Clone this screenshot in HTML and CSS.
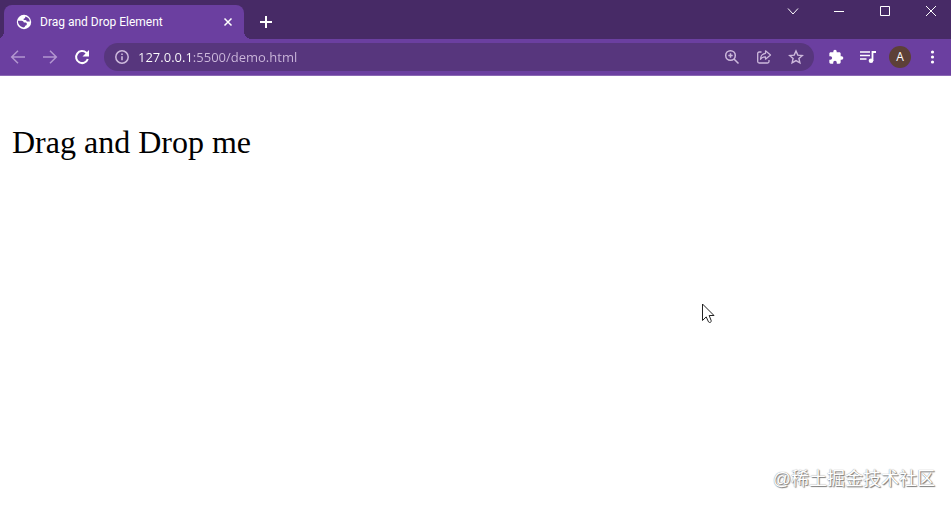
FILE: index.html
```html
<!DOCTYPE html>
<html lang="en">
<head>
    <meta charset="UTF-8">
    <meta name="viewport" content="width=device-width, initial-scale=1.0">
    <title>Drag and Drop Element</title>
    <link rel="stylesheet" href="styles.css">
</head>
<body>
    <header class="title-bar">
        <div class="tab">
            <svg class="favicon" width="16" height="16" viewBox="0 0 16 16">
                <circle cx="8" cy="8" r="7.2" fill="#fff"/>
                <path d="M2 6.800h3.600q1.900 0 2.300 1.800h1.700q1.300.1 1.300 1.500-.1 1.500-1.700 1.600-.2 1.500-1.600 1.700l-1-.2C3.800 12.300 1.700 9.800 2 6.800z" fill="#6b3fa0"/>
                <path d="M9.300 2.500v.8q-.1 1.300-1.600 1.400-.5.900.3 1.400h1.500q1.200.2 1.300 1.500h3.100C13.700 5 11.900 3 9.300 2.500z" fill="#6b3fa0"/>
            </svg>
            <span class="tab-title">Drag and Drop Element</span>
            <button class="tab-close" aria-label="Close tab">
                <svg width="10" height="10" viewBox="0 0 10 10"><path d="M1.500 1.500l7 7M8.500 1.500l-7 7"/></svg>
            </button>
        </div>
        <button class="new-tab" aria-label="New tab">
            <svg width="14" height="14" viewBox="0 0 14 14"><path d="M7 1v12M1 7h12"/></svg>
        </button>
        <div class="window-controls">
            <button aria-label="Search tabs">
                <svg width="12" height="12" viewBox="0 0 12 12"><path d="M1 3.500l5 5.500 5-5.500"/></svg>
            </button>
            <button aria-label="Minimize">
                <svg width="12" height="12" viewBox="0 0 12 12"><path d="M1 6.500h10"/></svg>
            </button>
            <button aria-label="Maximize">
                <svg width="12" height="12" viewBox="0 0 12 12"><path d="M1.500 1.500h9v9h-9z"/></svg>
            </button>
            <button aria-label="Close">
                <svg width="12" height="12" viewBox="0 0 12 12"><path d="M1 1l10 10M11 1L1 11"/></svg>
            </button>
        </div>
    </header>

    <nav class="toolbar">
        <button class="tool dim" aria-label="Back">
            <svg width="16" height="16" viewBox="0 0 16 16"><path d="M15 8H2M8 1.700L1.700 8 8 14.300"/></svg>
        </button>
        <button class="tool dim" aria-label="Forward">
            <svg width="16" height="16" viewBox="0 0 16 16"><path d="M1 8h13M8 1.700L14.300 8 8 14.300"/></svg>
        </button>
        <button class="tool" aria-label="Reload">
            <svg width="16" height="16" viewBox="0 0 16 16">
                <path d="M13.800 10A6 6 0 1 1 12.300 3.800L14 5.500" stroke-width="2"/>
                <path d="M15 1v6.500H8.500z" fill="currentColor" stroke="none"/>
            </svg>
        </button>

        <div class="address-bar">
            <button class="tool" aria-label="Site information">
                <svg width="16" height="16" viewBox="0 0 16 16">
                    <circle cx="8" cy="8" r="6.200" stroke-width="1.500"/>
                    <path d="M8 7.200v4M8 4.400v1.600" stroke-width="1.600"/>
                </svg>
            </button>
            <input class="url" type="text" value="127.0.0.1:5500/demo.html" aria-label="Address">
            <button class="tool" aria-label="Zoom">
                <svg width="16" height="16" viewBox="0 0 16 16">
                    <circle cx="6.500" cy="6.500" r="4.800"/>
                    <path d="M10 10l4.500 4.500M6.500 4.300v4.400M4.300 6.500h4.400"/>
                </svg>
            </button>
            <button class="tool" aria-label="Share">
                <svg width="16" height="16" viewBox="0 0 16 16">
                    <path d="M5.500 3H3.200Q1.700 3 1.700 4.500v8Q1.700 14 3.200 14h8.300q1.500 0 1.500-1.500V11" stroke-width="1.300"/>
                    <path d="M9.500 1.800L14.500 6l-5 4.200V7.800C7 7.700 5.700 8.600 4.500 10.300c.2-3.200 1.900-5.500 5-6z" stroke-width="1.200" stroke-linejoin="round"/>
                </svg>
            </button>
            <button class="tool" aria-label="Bookmark">
                <svg width="16" height="16" viewBox="0 0 16 16"><path d="M8 2l1.800 4.100 4.500.4-3.400 3 1 4.400L8 11.600l-3.900 2.300 1-4.400-3.400-3 4.500-.4z" stroke-width="1.400"/></svg>
            </button>
        </div>

        <button class="tool" aria-label="Extensions">
            <svg width="16" height="16" viewBox="0 0 24 24"><path fill="currentColor" stroke="none" d="M20.500 11H19V7c0-1.100-.9-2-2-2h-4V3.500a2.500 2.500 0 0 0-5 0V5H4c-1.100 0-2 .9-2 2v3.800h1.500a2.700 2.700 0 0 1 0 5.400H2V20c0 1.100.9 2 2 2h3.800v-1.500a2.700 2.700 0 0 1 5.400 0V22H17c1.100 0 2-.9 2-2v-4h1.500a2.500 2.500 0 0 0 0-5z"/></svg>
        </button>
        <button class="tool" aria-label="Media controls">
            <svg width="16" height="16" viewBox="0 0 16 16">
                <path d="M0 3h10M0 6.500h10M0 10h6.500" stroke-width="1.600"/>
                <path d="M12.500 12V3H16" stroke-width="1.800"/>
                <circle cx="11" cy="11.800" r="2.300" fill="currentColor" stroke="none"/>
            </svg>
        </button>
        <button class="tool" aria-label="Profile"><span class="avatar">A</span></button>
        <button class="tool" aria-label="Menu">
            <svg width="16" height="16" viewBox="0 0 16 16">
                <g fill="currentColor" stroke="none">
                    <circle cx="8.500" cy="3" r="1.600"/>
                    <circle cx="8.500" cy="8" r="1.600"/>
                    <circle cx="8.500" cy="13" r="1.600"/>
                </g>
            </svg>
        </button>
    </nav>

    <main class="page">
        <div class="draggable" draggable="true">Drag and Drop me</div>
        <svg class="cursor" width="14" height="21" viewBox="0 0 14 21">
            <path d="M1.500 1v16.500l3.700-3.600 2.300 5q.9.900 1.900.400 1.100-.5.800-1.600L8.200 12.500H13z" fill="#fff" stroke="#222" stroke-width="1"/>
        </svg>
        <p class="watermark" lang="zh">@稀土掘金技术社区</p>
    </main>
</body>
</html>
```

FILE: styles.css
```css
:root {
    --frame: #472a66;
    --toolbar: #6b3fa0;
    --field: #57367d;
    --muted: #cdb9dc;
}

* {
    box-sizing: border-box;
}

body {
    display: flex;
    flex-direction: column;
    min-height: 100vh;
    margin: 0;
    background: #fff;
    font-family: "Open Sans", "Noto Sans", sans-serif;
}

button {
    display: flex;
    align-items: center;
    justify-content: center;
    padding: 0;
    border: 0;
    background: none;
    color: inherit;
    font: inherit;
}

svg {
    flex: none;
    fill: none;
    stroke: currentColor;
    stroke-width: 1.5;
}

/* tab strip */
.title-bar {
    display: flex;
    height: 39px;
    padding: 5px 0 0 4px;
    background: var(--frame);
    color: #fff;
}

.tab {
    position: relative;
    display: flex;
    align-items: center;
    width: 240px;
    padding: 0 8px 0 12px;
    border-radius: 8px 8px 0 0;
    background: var(--toolbar);
}

/* curved feet of the tab */
.tab::before,
.tab::after {
    content: "";
    position: absolute;
    bottom: 0;
    width: 8px;
    height: 8px;
}

.tab::before {
    right: 100%;
    background: radial-gradient(circle at 0 0, transparent 8px, var(--toolbar) 8px);
}

.tab::after {
    left: 100%;
    background: radial-gradient(circle at 100% 0, transparent 8px, var(--toolbar) 8px);
}

.favicon {
    stroke: none;
}

.tab-title {
    flex: 1;
    margin-left: 8px;
    font-family: Roboto, sans-serif;
    font-size: 12px;
    line-height: 16px;
    white-space: nowrap;
}

.tab-close {
    width: 16px;
    height: 16px;
}

.new-tab {
    width: 28px;
    margin-left: 8px;
}

.new-tab svg {
    stroke-width: 2;
}

.window-controls {
    display: flex;
    gap: 6px;
    height: 12px;
    margin-left: auto;
}

.window-controls button {
    width: 40px;
}

.window-controls svg {
    stroke-width: 1;
}

/* toolbar */
.toolbar {
    display: flex;
    align-items: center;
    height: 37px;
    padding: 0 3px 0 2px;
    border-bottom: 1px solid #8a68b3;
    background: var(--toolbar);
    color: #fff;
}

.tool {
    flex: none;
    width: 32px;
    height: 28px;
}

.dim {
    color: #b396d0;
}

.address-bar {
    display: flex;
    flex: 1;
    align-items: center;
    min-width: 0;
    height: 28px;
    margin: 0 6px;
    padding: 0 2px;
    border-radius: 14px;
    background: var(--field);
    color: var(--muted);
}

/* host part is brighter than the port and path */
.url {
    flex: 1;
    min-width: 0;
    height: 20px;
    padding: 0;
    border: 0;
    outline: 0;
    background: linear-gradient(to right, #fff 55px, var(--muted) 55px);
    background-clip: text;
    -webkit-background-clip: text;
    color: transparent;
    font-family: inherit;
    font-size: 13px;
    line-height: 20px;
}

.avatar {
    width: 22px;
    height: 22px;
    border-radius: 50%;
    background: #5d4037;
    font-size: 12px;
    line-height: 22px;
    text-align: center;
}

/* document */
.page {
    position: relative;
    flex: 1;
    padding: 48px 12px;
}

.draggable {
    width: max-content;
    color: #000;
    font-family: "Liberation Serif", serif;
    font-size: 32px;
    line-height: 36px;
}

.cursor {
    position: absolute;
    top: 227px;
    left: 701px;
}

.watermark {
    position: absolute;
    right: 16px;
    bottom: 14px;
    margin: 0;
    color: #fff;
    font-family: "Liberation Sans", "Noto Sans CJK SC", sans-serif;
    font-size: 18px;
    line-height: 26px;
    text-shadow: 1px 1px 1px #777, 0 0 1px #777;
}
```
